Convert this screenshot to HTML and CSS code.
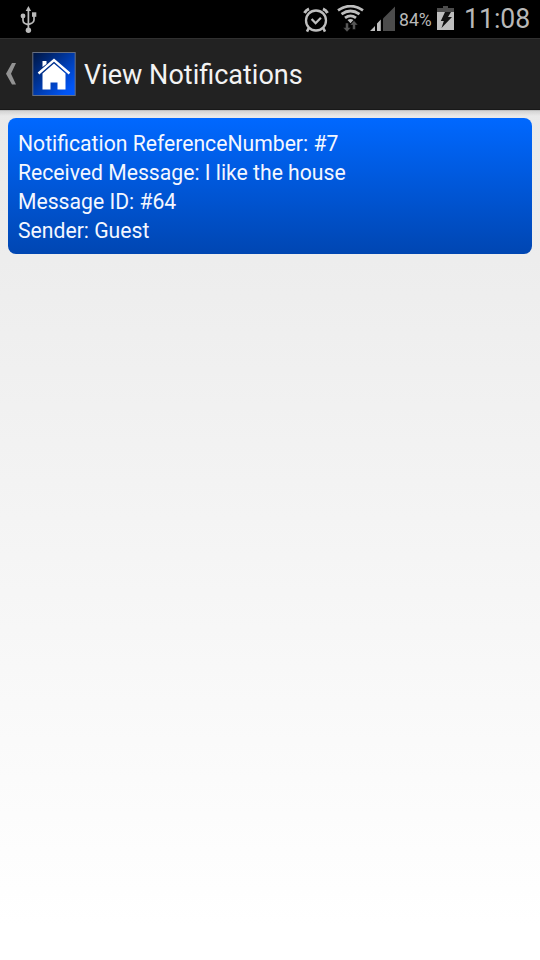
FILE: index.html
```
<!DOCTYPE html>
<html lang="en">
<head>
<meta charset="utf-8">
<title>View Notifications</title>
<link rel="stylesheet" href="styles.css">
</head>
<body>
<div class="screen">
  <header class="status-bar">
    <svg class="usb" width="18" height="28" viewBox="0 0 18 28" fill="none" stroke="#b9b9b9" stroke-width="1.7">
      <path d="M8.4 4V24M3 10v4.5q0 2 2 3l3.4 1.4M14 9v5q0 2-2 3l-3.6 1.6"/>
      <path d="M8.4 0l2.7 5H5.700z" fill="#b9b9b9" stroke="none"/>
      <circle cx="3" cy="10" r="2.4" fill="#b9b9b9" stroke="none"/>
      <rect x="12" y="6.300" width="4.300" height="4.500" fill="#b9b9b9" stroke="none"/>
      <circle cx="8.400" cy="24.200" r="2.700" fill="#b9b9b9" stroke="none"/>
    </svg>
    <div class="status-icons">
      <svg class="alarm" width="26" height="26" viewBox="0 0 26 26" fill="none" stroke="#bebebe" stroke-width="2.300">
        <circle cx="13" cy="13.500" r="10"/>
        <path d="M8.600 12l4 4.200 5.300-5.400" stroke-width="2.300"/>
        <path d="M1.500 6Q3 3 6 1.800M24.500 6Q23 3 20 1.800" stroke-width="3"/>
        <path d="M5.800 21l-1.800 3.600M20.200 21l1.800 3.600" stroke-width="2.600"/>
      </svg>
      <svg class="wifi" width="28" height="28" viewBox="0 0 28 28" fill="none" stroke="#bebebe" stroke-width="2.800">
        <path d="M1 5.300Q13.500-3 26 5.300M4.500 9.100q9-6.100 18 0M8 12.900q5.500-4.100 11 0"/>
        <path d="M10.500 15q3-1.900 6 0l-3 3.200z" fill="#bebebe" stroke="none"/>
        <path d="M8.500 18h3v4.500H14l-4 4.500-4-4.500h2.500zM15.500 24.500V20H13l4-4.500 4 4.500h-2.500v4.500z" fill="#555" stroke="#000" stroke-width=".5"/>
      </svg>
      <svg class="signal" width="26" height="26" viewBox="0 0 26 26">
        <path d="M0 25l5-5v5zM7 25v-7.500l3.800-4V25z" fill="#bebebe"/>
        <path d="M13 25V12.500L25 .5V25z" fill="#4c4c4c"/>
      </svg>
      <span class="percent">84%</span>
      <svg class="battery" width="18" height="24" viewBox="0 0 18 24">
        <path d="M6 0h5v2h6v4H0V2h6z" fill="#4c4c4c"/>
        <path d="M0 6h17v18H0z" fill="#bebebe"/>
        <path d="M8 6h6l-3 5h4L4.500 22l2.300-7H3.800z" fill="#111"/>
      </svg>
      <time class="clock">11:08</time>
    </div>
  </header>
  <nav class="action-bar">
    <svg class="back" width="11" height="22" viewBox="0 0 11 22"><path d="M6 0H10L5 10.800 10 21.500H6L0 10.800z" fill="#929292"/></svg>
    <svg class="home" width="44" height="44" viewBox="0 0 44 44">
      <defs><linearGradient id="tile" x1="0" y1="0" x2="1" y2="1"><stop offset="0" stop-color="#001540"/><stop offset=".85" stop-color="#0055f5"/><stop offset="1" stop-color="#0058ff"/></linearGradient></defs>
      <rect x=".8" y=".5" width="42.400" height="43" fill="url(#tile)" stroke="#666e80"/>
      <path d="M10.500 15V9h4v3z" fill="#fff"/>
      <path d="M6.500 21.500L22 8l15.500 13.500" fill="none" stroke="#fff" stroke-width="2.400"/>
      <path d="M22 11.500L33.500 21.500V37.500h-8V30.500h-7v7h-8V21.500z" fill="#fff"/>
    </svg>
    <h1 class="title">View Notifications</h1>
  </nav>
  <main class="content">
    <article class="notification">
      <p>Notification ReferenceNumber: #7</p>
      <p>Received Message: I like the house</p>
      <p>Message ID: #64</p>
      <p>Sender: Guest</p>
    </article>
  </main>
</div>
</body>
</html>
```
FILE: styles.css
```
* { box-sizing: border-box; }
body { margin: 0; font-family: Roboto, sans-serif; }
svg { display: block; flex: none; }
.screen { height: 960px; display: flex; flex-direction: column; overflow: hidden; }
.status-bar { height: 38px; flex: none; display: flex; justify-content: space-between; padding: 6px 9px 0 20px; background: #000; color: #b8b8b8; }
.status-icons { display: flex; }
.alarm { margin-top: 1px; }
.wifi { margin: -1px 0 0 8px; }
.signal { margin-left: 5px; }
.percent { margin-left: 3px; width: 33px; font-size: 18px; line-height: 28px; white-space: nowrap; transform: scaleX(.98); transform-origin: left; }
.battery { margin-left: 5px; }
.clock { margin-left: 9px; width: 67px; font-size: 28px; line-height: 26px; white-space: nowrap; transform: scaleX(.95); transform-origin: left; }
.action-bar { height: 72px; flex: none; display: flex; align-items: center; padding: 0 0 1px 6px; background: linear-gradient(#222 0 70px, #181818 70px); border-top: 1px solid #303030; }
.home { margin-left: 15px; }
.title { margin: 2px 0 0 8px; color: #f3f3f3; font-size: 28px; font-weight: 400; line-height: 32px; transform: scaleX(.965); transform-origin: left; }
.content { flex: 1; padding: 8px; background: linear-gradient(#aaa 0, rgba(190,190,190,.5) 1px, rgba(205,205,205,0) 6px), linear-gradient(#e9e9e9, #fff 96%); }
.notification { height: 136px; padding: 11px 10px; border-radius: 8px; background: linear-gradient(#0068ff, #0046b2); color: #f4f7ff; font-size: 22px; line-height: 29px; }
.notification p { margin: 0; transform: scaleX(.962); transform-origin: left; white-space: nowrap; }
```
